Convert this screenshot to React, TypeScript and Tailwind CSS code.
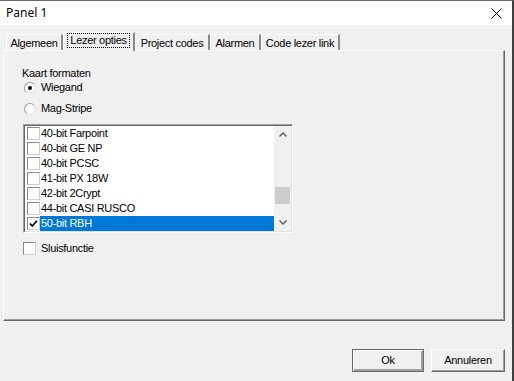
import React from "react";

const formats = [
  { label: "40-bit Farpoint", checked: false },
  { label: "40-bit GE NP", checked: false },
  { label: "40-bit PCSC", checked: false },
  { label: "41-bit PX 18W", checked: false },
  { label: "42-bit 2Crypt", checked: false },
  { label: "44-bit CASI RUSCO", checked: false },
  { label: "50-bit RBH", checked: true, selected: true },
];

const font = { fontFamily: "'Liberation Sans', Arial, sans-serif" };

function CheckBox({ checked }: { checked?: boolean }) {
  return (
    <span className="w-[13px] h-[13px] shrink-0 bg-white border border-t-[#8a8a8a] border-l-[#8a8a8a] border-r-[#cfcfcf] border-b-[#cfcfcf] flex items-center justify-center">
      {checked && (
        <svg width="9" height="9" viewBox="0 0 9 9">
          <path d="M1 4.5 L3.3 7 L8 1.8" fill="none" stroke="#000" strokeWidth="1.7" />
        </svg>
      )}
    </span>
  );
}

function Radio({ checked }: { checked?: boolean }) {
  return (
    <span className="w-[12px] h-[12px] rounded-full bg-white border border-[#9a9a9a] border-r-[#e0e0e0] border-b-[#e0e0e0] flex items-center justify-center shrink-0">
      {checked && <span className="w-[4px] h-[4px] rounded-full bg-black" />}
    </span>
  );
}

function Chevron({ up }: { up?: boolean }) {
  return (
    <svg width="8" height="5" viewBox="0 0 8 5">
      <path d={up ? "M0.5 4.5 L4 1 L7.5 4.5" : "M0.5 0.5 L4 4 L7.5 0.5"} fill="none" stroke="#606060" strokeWidth="1.5" />
    </svg>
  );
}

const tabs = [
  { label: "Algemeen", w: "w-[57px]" },
  { label: "Lezer opties", w: "w-[72px]", active: true },
  { label: "Project codes", w: "w-[75px]" },
  { label: "Alarmen", w: "w-[51px]" },
  { label: "Code lezer link", w: "w-[79px]" },
];

export default function App() {
  return (
    <div className="w-[514px] h-[381px] bg-[#f0f0f0] border-t border-t-[#6a6a6a] border-r-2 border-r-[#3f3f3f] flex flex-col text-[11px] tracking-[-0.3px] text-black overflow-hidden" style={font}>
      {/* Title bar */}
      <div className="h-[24px] bg-white flex items-center justify-between pl-[6px] pr-[10px] shrink-0 tracking-normal">
        <span className="text-[12px]" style={{ fontFamily: "'Noto Sans', 'Liberation Sans', sans-serif" }}>Panel 1</span>
        <svg width="11" height="11" viewBox="0 0 11 11">
          <path d="M0.5 0.5 L10.5 10.5 M10.5 0.5 L0.5 10.5" stroke="#000" strokeWidth="1" />
        </svg>
      </div>

      {/* Tabs */}
      <div className="mt-[7px] h-[19px] flex items-end pl-[6px] relative z-10">
        {tabs.map((t) =>
          t.active ? (
            <div key={t.label} className={`${t.w} h-[19px] bg-[#f0f0f0] border-t border-l border-white border-r-2 border-r-[#8a8a8a] flex items-start justify-center pt-[1px]`}>
              <span className="outline-1 outline-dotted outline-black px-[2px] leading-[13px]">{t.label}</span>
            </div>
          ) : (
            <div key={t.label} className={`${t.w} h-[16px] mb-[1px] border-t border-l border-white border-r-2 border-r-[#8a8a8a] flex items-center justify-center leading-[13px] pt-[1px]`}>
              {t.label}
            </div>
          )
        )}
      </div>

      {/* Panel */}
      <div className="ml-[3px] w-[502px] h-[271px] -mt-[1px] border-t border-l border-white border-r border-b border-r-[#696969] border-b-[#696969] shadow-[inset_-1px_-1px_0_#a0a0a0] pl-[18px] pt-[16px] flex flex-col items-start">
        <div className="leading-[13px]">Kaart formaten</div>
        <div className="mt-[1px] h-[13px] flex items-center gap-[5px] ml-[2px]">
          <Radio checked />
          <span>Wiegand</span>
        </div>
        <div className="mt-[8px] h-[13px] flex items-center gap-[5px] ml-[2px]">
          <Radio />
          <span>Mag-Stripe</span>
        </div>

        {/* List */}
        <div className="mt-[9px] ml-[1px] w-[270px] h-[109px] border border-t-[#a0a0a0] border-l-[#a0a0a0] border-r-white border-b-white shadow-[inset_1px_1px_0_#696969,inset_-1px_-1px_0_#e3e3e3] p-[1px] flex">
          <div className="flex-1 bg-white flex flex-col">
            {formats.map((f) => (
              <div key={f.label} className="h-[15px] flex items-center">
                <span className="ml-[2px]">
                  <CheckBox checked={f.checked} />
                </span>
                <span className={`flex-1 h-[15px] pl-[1px] leading-[15px] ${f.selected ? "bg-[#0078d7] text-white" : ""}`}>
                  {f.label}
                </span>
              </div>
            ))}
          </div>
          <div className="w-[17px] bg-[#f0f0f0] flex flex-col">
            <div className="h-[17px] flex items-center justify-center"><Chevron up /></div>
            <div className="flex-1 flex flex-col items-center">
              <div className="mt-[44px] w-[15px] h-[17px] bg-[#cdcdcd]" />
            </div>
            <div className="h-[17px] flex items-center justify-center"><Chevron /></div>
          </div>
        </div>

        <div className="mt-[7px] ml-[1px] flex items-center gap-[5px]">
          <CheckBox />
          <span>Sluisfunctie</span>
        </div>
      </div>

      {/* Buttons */}
      <div className="mt-[28px] flex justify-end gap-[7px] pr-[7px]">
        <button className="w-[72px] h-[23px] border border-[#696969] bg-[#f0f0f0] shadow-[inset_1px_1px_0_#ffffff,inset_-1px_-1px_0_#a0a0a0,inset_-2px_-2px_0_#a0a0a0]">
          Ok
        </button>
        <button className="w-[74px] h-[23px] border border-t-white border-l-white border-r-[#696969] border-b-[#696969] bg-[#f0f0f0] shadow-[inset_-1px_-1px_0_#a0a0a0]">
          Annuleren
        </button>
      </div>
    </div>
  );
}
